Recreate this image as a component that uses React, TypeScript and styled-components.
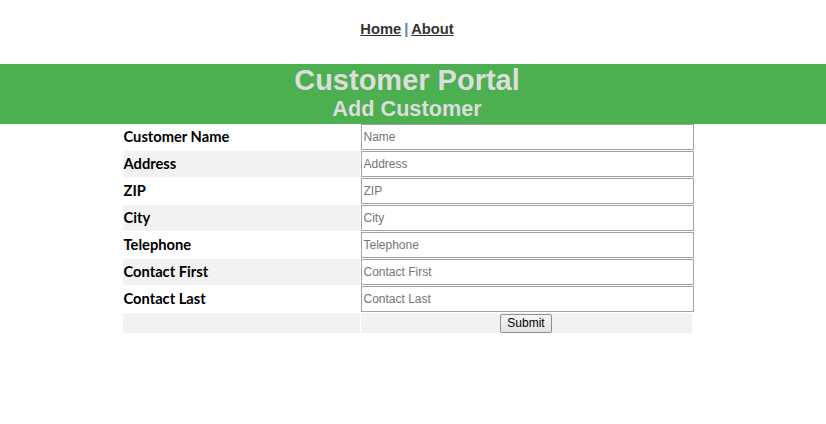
import React from "react";
import styled, { createGlobalStyle } from "styled-components";

const Global = createGlobalStyle`
  html, body { margin: 0; padding: 0; background: #ffffff; }
  body { font-family: "Liberation Sans", Arial, sans-serif; }
  * { box-sizing: border-box; }
`;

const Page = styled.div`
  width: 826px;
`;

const Nav = styled.nav`
  width: 814px;
  height: 64px;
  padding-top: 21px;
  text-align: center;
  font-family: "Liberation Sans", Arial, sans-serif;
  font-size: 14.7px;
  font-weight: bold;
  line-height: 17px;
`;

const NavLink = styled.a`
  color: #333333;
  text-decoration: underline;
`;

const Sep = styled.span`
  color: #5a7fa8;
  margin: 0 3px;
`;

const Banner = styled.header`
  width: 826px;
  height: 60px;
  background: #4caf50;
`;

const BannerInner = styled.div`
  width: 814px;
  text-align: center;
  color: #dddddd;
  font-weight: bold;
`;

const Title = styled.h1`
  margin: 0;
  font-size: 29px;
  line-height: 32px;
  font-weight: bold;
`;

const Subtitle = styled.h2`
  margin: 0;
  font-size: 21.7px;
  line-height: 26px;
  font-weight: bold;
`;

const Main = styled.main`
  width: 814px;
`;

const Form = styled.form`
  width: 569px;
  margin: 0 auto;
  display: grid;
  grid-template-columns: 237px 331px;
  grid-auto-rows: 26px;
  column-gap: 1px;
  row-gap: 1px;
`;

const Label = styled.label<{ $shade: boolean }>`
  display: flex;
  align-items: center;
  padding-left: 1px;
  padding-bottom: 2px;
  background: ${(p) => (p.$shade ? "#f2f2f2" : "#ffffff")};
  font-family: "Lato", "Open Sans", sans-serif;
  font-size: 14.7px;
  font-weight: bold;
  color: #000000;
`;

const Cell = styled.div<{ $shade: boolean }>`
  background: ${(p) => (p.$shade ? "#f2f2f2" : "#ffffff")};
`;

const Input = styled.input`
  display: block;
  width: 333px;
  height: 26px;
  margin: 0;
  padding: 0 2px;
  border: 1px solid #a3a3a3;
  background: #ffffff;
  font-family: "Liberation Sans", Arial, sans-serif;
  font-size: 12px;
  color: #000;
  &::placeholder { color: #757575; }
`;

const LastRow = styled.div<{ $shade: boolean }>`
  height: 20px;
  background: ${(p) => (p.$shade ? "#f2f2f2" : "#ffffff")};
  display: flex;
  justify-content: center;
  align-items: flex-start;
  padding-top: 1px;
`;

const Button = styled.button`
  height: 19px;
  padding: 0 6px;
  border: 1px solid #8f8f8f;
  border-radius: 2px;
  background: linear-gradient(#f6f6f6, #e3e3e3);
  font-family: "Liberation Sans", Arial, sans-serif;
  font-size: 12px;
  line-height: 15px;
  color: #000;
`;

const fields = [
  { label: "Customer Name", ph: "Name" },
  { label: "Address", ph: "Address" },
  { label: "ZIP", ph: "ZIP" },
  { label: "City", ph: "City" },
  { label: "Telephone", ph: "Telephone" },
  { label: "Contact First", ph: "Contact First" },
  { label: "Contact Last", ph: "Contact Last" },
];

export default function App() {
  return (
    <Page>
      <Global />
      <Nav>
        <NavLink href="#">Home</NavLink>
        <Sep>|</Sep>
        <NavLink href="#">About</NavLink>
      </Nav>
      <Banner>
        <BannerInner>
          <Title>Customer Portal</Title>
          <Subtitle>Add Customer</Subtitle>
        </BannerInner>
      </Banner>
      <Main>
        <Form onSubmit={(e) => e.preventDefault()}>
          {fields.map((f, i) => (
            <React.Fragment key={f.label}>
              <Label $shade={i % 2 === 1}>{f.label}</Label>
              <Cell $shade={i % 2 === 1}>
                <Input placeholder={f.ph} />
              </Cell>
            </React.Fragment>
          ))}
          <LastRow $shade />
          <LastRow $shade>
            <Button type="submit">Submit</Button>
          </LastRow>
        </Form>
      </Main>
    </Page>
  );
}
